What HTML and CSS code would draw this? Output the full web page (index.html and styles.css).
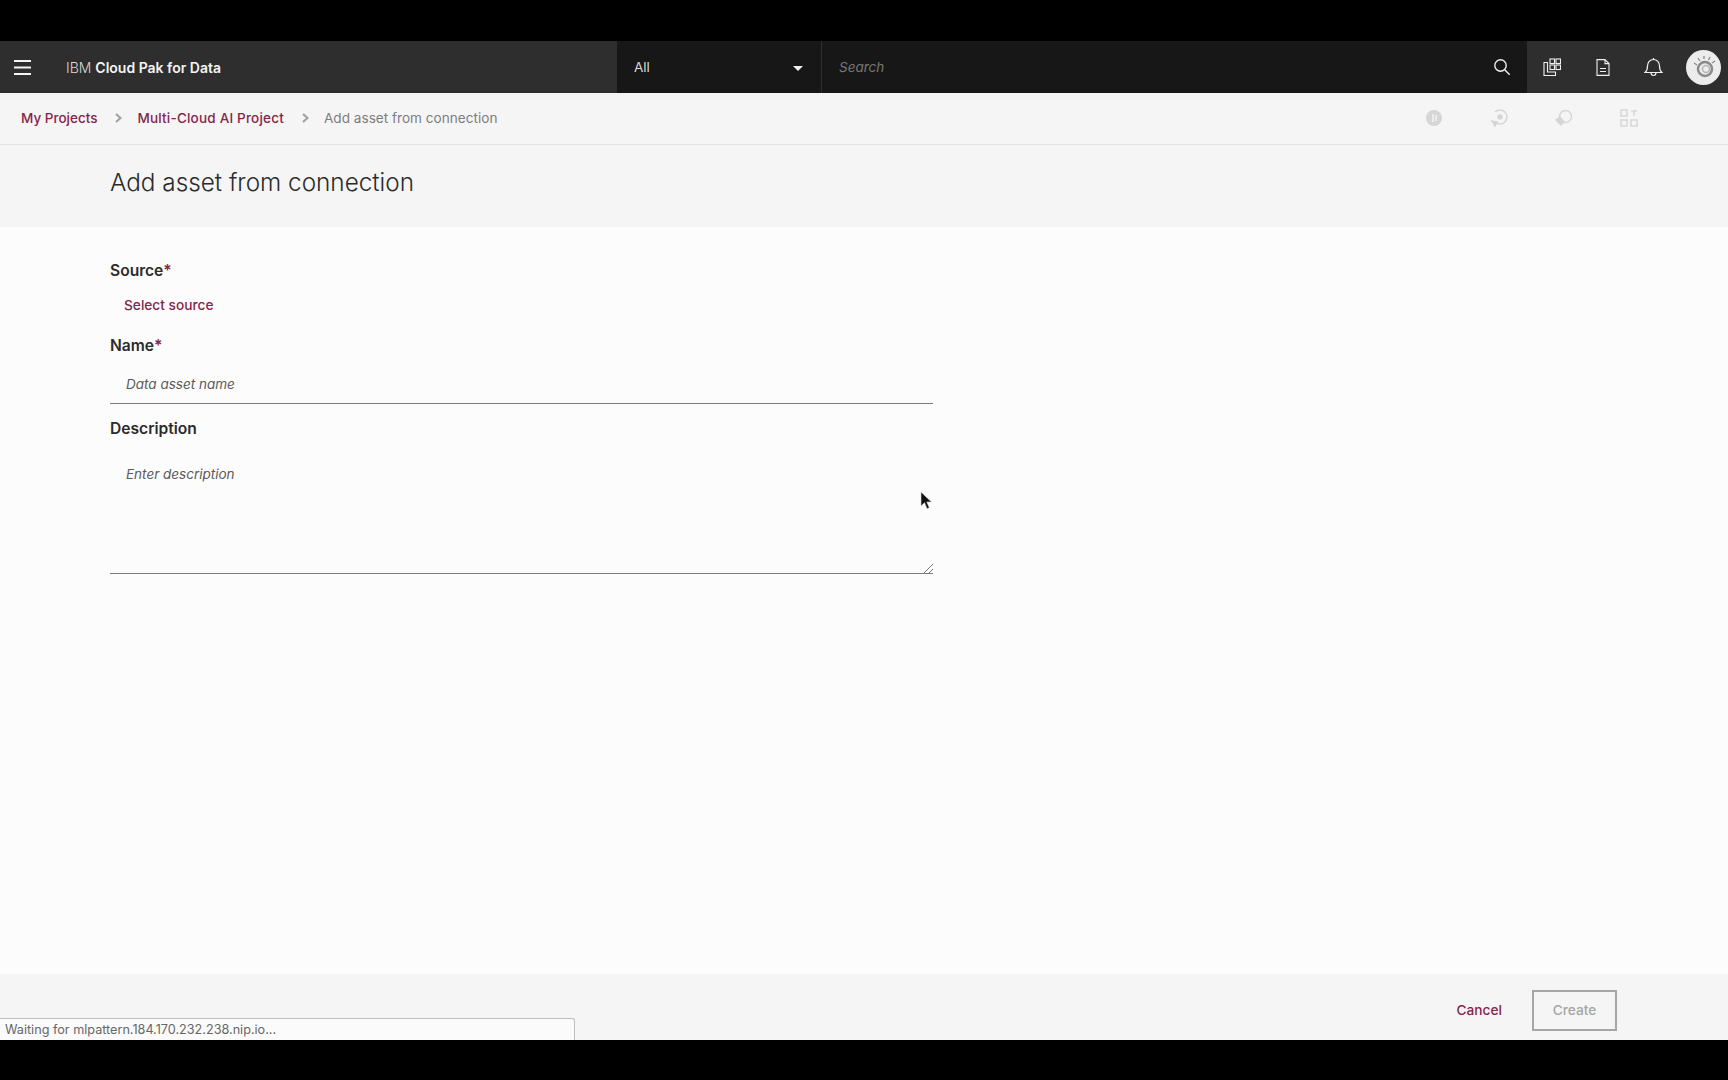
FILE: index.html
```html
<!DOCTYPE html>
<html lang="en">
<head>
<meta charset="utf-8">
<title>Add asset from connection</title>
<link rel="stylesheet" href="styles.css">
</head>
<body>
<div class="letterbox-top"></div>
<div class="app">
  <header class="topbar">
    <div class="brand">
      <svg class="menu-icon" width="17" height="15" viewBox="0 0 17 15"><path d="M0 1h17M0 7.500h17M0 14h17" stroke="#f4f4f4" stroke-width="2"/></svg>
      <span class="brand-name"><span class="brand-ibm">IBM</span> <b>Cloud Pak for Data</b></span>
    </div>
    <div class="search">
      <div class="scope"><span>All</span><i class="caret"></i></div>
      <div class="search-field"><span>Search</span>
        <svg width="18" height="18" viewBox="0 0 18 18" fill="none" stroke="#f0f0f0" stroke-width="1.400"><circle cx="7.500" cy="7.500" r="5.700"/><path d="M11.700 11.700l5 5"/></svg>
      </div>
    </div>
    <div class="actions">
      <svg class="act act-first" width="18" height="18" viewBox="0 0 18 18" fill="none" stroke="#f0f0f0" stroke-width="1.100"><rect x="7" y="1" width="4.500" height="4.500"/><rect x="13" y="1" width="4.500" height="4.500"/><rect x="7" y="7" width="4.500" height="4.500"/><rect x="13" y="7" width="4.500" height="4.500"/><path d="M4.500 4.500H1v13h11.500v-3.500H4.500z"/></svg>
      <svg class="act" width="14" height="17" viewBox="0 0 14 17" fill="none" stroke="#f0f0f0" stroke-width="1.100"><path d="M1 .6h8l4 4v11.800H1zM9 .6v4h4M4 9.500h6M4 12.500h6"/></svg>
      <svg class="act" width="19" height="20" viewBox="0 0 19 20" fill="none" stroke="#f0f0f0" stroke-width="1.200"><path d="M1 15.500c2-1.600 2.500-3 2.500-6.500 0-3.500 2.400-6.500 6-6.500s6 3 6 6.500c0 3.500.5 4.900 2.500 6.500zM7 15.500c0 4 5 4 5 0M9.500 2.500V1"/></svg>
      <div class="avatar">
        <svg width="26" height="26" viewBox="0 0 26 26" fill="none"><circle cx="14" cy="15" r="7" stroke="#8a8a8a" stroke-width="2.500"/><circle cx="15" cy="15" r="3.500" stroke="#b5b5b5" stroke-width="1.500"/><path d="M3 9l3 2M7 4l2 3M13 2v3M19 3l-1.500 3M24 7l-3 2" stroke="#8a8a8a" stroke-width="1.300"/></svg>
      </div>
    </div>
  </header>

  <nav class="crumbs">
    <a class="crumb-link">My Projects</a>
    <svg class="chev" width="7" height="10" viewBox="0 0 7 10" fill="none" stroke="#a0a0a0" stroke-width="2"><path d="M1 1l4.500 4L1 9"/></svg>
    <a class="crumb-link crumb-project">Multi-Cloud AI Project</a>
    <svg class="chev" width="7" height="10" viewBox="0 0 7 10" fill="none" stroke="#a0a0a0" stroke-width="2"><path d="M1 1l4.500 4L1 9"/></svg>
    <span class="crumb-current">Add asset from connection</span>
    <div class="tools">
      <svg width="18" height="18" viewBox="0 0 18 18"><circle cx="9" cy="9" r="8" fill="#d6d6d6"/><path d="M8 5v8M11 6v6" stroke="#f3f3f3" stroke-width="1.500"/></svg>
      <svg width="18" height="18" viewBox="0 0 18 18" fill="none" stroke="#d6d6d6" stroke-width="1.500"><path d="M5 13A7 7 0 1 0 5 3"/><circle cx="10" cy="8" r="2" fill="#d6d6d6"/><path d="M2 12l3 5 2-4z" fill="#d6d6d6"/></svg>
      <svg width="18" height="18" viewBox="0 0 18 18" fill="none" stroke="#d6d6d6" stroke-width="1.500"><circle cx="10.500" cy="7.500" r="6"/><path d="M1 11l4-3 4 5-3 3z" fill="#d6d6d6"/></svg>
      <svg width="18" height="18" viewBox="0 0 18 18" fill="none" stroke="#d6d6d6" stroke-width="1.500"><rect x="1" y="1" width="6" height="6"/><rect x="1" y="11" width="6" height="6"/><rect x="11" y="11" width="6" height="6"/><path d="M11 2h6M14 2v5"/></svg>
    </div>
  </nav>

  <div class="title-band"><h1>Add asset from connection</h1></div>

  <main class="form">
    <div class="label source-label">Source<span class="req">*</span></div>
    <a class="select-source">Select source</a>
    <div class="label name-label">Name<span class="req">*</span></div>
    <div class="field name-field">Data asset name</div>
    <div class="label desc-label">Description</div>
    <div class="field desc-field">Enter description
      <svg class="grip" width="9" height="9" viewBox="0 0 9 9" stroke="#777" fill="none"><path d="M0 9l9-9M5 9l4-4"/></svg>
    </div>
    <svg class="cursor" width="12" height="19" viewBox="0 0 12 19"><path d="M1 1v14l3.500-3.300 2.500 6 2.300-1-2.500-5.700h4.700z" fill="#111" stroke="#ddd" stroke-width=".6"/></svg>
  </main>

  <footer class="footer">
    <div class="status">Waiting for mlpattern.184.170.232.238.nip.io...</div>
    <a class="cancel">Cancel</a>
    <button class="create" disabled>Create</button>
  </footer>
</div>
<div class="letterbox-bottom"></div>
</body>
</html>
```
FILE: styles.css
```css
* { box-sizing: border-box; }
html, body { margin: 0; height: 100%; }
body {
  background: #000;
  font-family: "Inter", "Liberation Sans", sans-serif;
  color: #2b2b2b;
  overflow: hidden;
  display: flex;
  flex-direction: column;
}
.letterbox-top { height: 41px; flex: none; background: #000; }
.letterbox-bottom { height: 40px; flex: none; background: #000; }
.app { height: 999px; flex: none; display: flex; flex-direction: column; background: #fcfcfc; }

.topbar { height: 52px; flex: none; display: flex; background: #2e2e2e; color: #f4f4f4; }
.brand { width: 617px; display: flex; align-items: center; padding-left: 14px; }
.menu-icon { flex: none; }
.brand-name { margin-left: 35px; font-size: 14px; }
.brand-ibm { color: #d8d8d8; font-weight: 300; }
.brand-name b { font-weight: 600; }
.search { width: 910px; display: flex; background: #171717; }
.scope { width: 205px; display: flex; align-items: center; justify-content: space-between; padding: 0 18px 0 17px; font-size: 13.500px; color: #d8d8d8; border-right: 1px solid #2e2e2e; }
.caret { width: 0; height: 0; border-left: 5px solid transparent; border-right: 5px solid transparent; border-top: 5px solid #f0f0f0; margin-top: 2px; }
.search-field { flex: 1; display: flex; align-items: center; justify-content: space-between; padding: 0 16px 0 17px; font-size: 13.500px; font-style: italic; color: #777; }
.actions { flex: 1; display: flex; align-items: center; padding-left: 16px; }
.act { flex: none; margin-right: 35px; }
.act:nth-child(2) { margin-right: 34px; }
.act:nth-child(3) { margin-right: 23px; }
.avatar { width: 35px; height: 35px; border-radius: 50%; background: #ececec; display: flex; align-items: center; justify-content: center; }

.crumbs { height: 52px; flex: none; display: flex; align-items: center; padding: 0 0 2px 21px; background: #f5f5f5; border-bottom: 1px solid #e2e2e2; font-size: 13.500px; }
.crumb-link { color: #84264a; font-weight: 500; }
.crumb-project { letter-spacing: .2px; }
.crumb-current { color: #7d7d7d; font-size: 13.600px; }
.chev { margin: 0 15px 0 18px; }
.tools { margin-left: auto; display: flex; gap: 47px; padding-right: 90px; }

.title-band { height: 82px; flex: none; background: #f5f5f5; padding: 21px 0 0 110px; }
h1 { margin: 0; font-size: 24.300px; line-height: 32px; font-weight: 300; color: #2b2b2b; }

.form { flex: 1; position: relative; padding: 0 0 0 110px; }
.label { font-size: 15.600px; font-weight: 600; line-height: 20px; color: #2b2b2b; }
.req { color: #84264a; }
.source-label { margin-top: 34px; }
.select-source { display: block; margin: 15px 0 0 14px; font-size: 13.700px; font-weight: 500; line-height: 18px; color: #84264a; }
.name-label { margin-top: 22px; }
.field { width: 823px; font-size: 13.500px; font-style: italic; color: #5a5a5a; padding-left: 16px; border-bottom: 1px solid #7a7a7a; }
.name-field { margin-top: 9px; height: 39px; line-height: 39px; }
.desc-label { margin-top: 15px; }
.desc-field { position: relative; margin-top: 18px; height: 117px; padding-top: 5px; line-height: 24px; }
.grip { position: absolute; right: 0; bottom: 0; }
.cursor { position: absolute; left: 920px; top: 264px; }

.footer { height: 66px; flex: none; position: relative; display: flex; align-items: center; justify-content: flex-end; background: #f5f5f5; padding: 6px 111px 0 0; }
.status { position: absolute; left: 0; bottom: 0; width: 575px; height: 22px; background: #fbfbfb; border: 1px solid #bdbdbd; border-bottom: 0; border-left: 0; border-radius: 0 3px 0 0; padding-left: 5px; font-family: "Inter", "Liberation Sans", sans-serif; font-size: 12.650px; line-height: 21px; color: #666; }
.cancel { margin-right: 30px; font-size: 13.700px; font-weight: 500; color: #84264a; }
.create { width: 85px; height: 41px; background: transparent; border: 2px solid #a6a6a6; font: 500 13.700px "Inter", "Liberation Sans", sans-serif; color: #a6a6a6; padding: 0; }
```
